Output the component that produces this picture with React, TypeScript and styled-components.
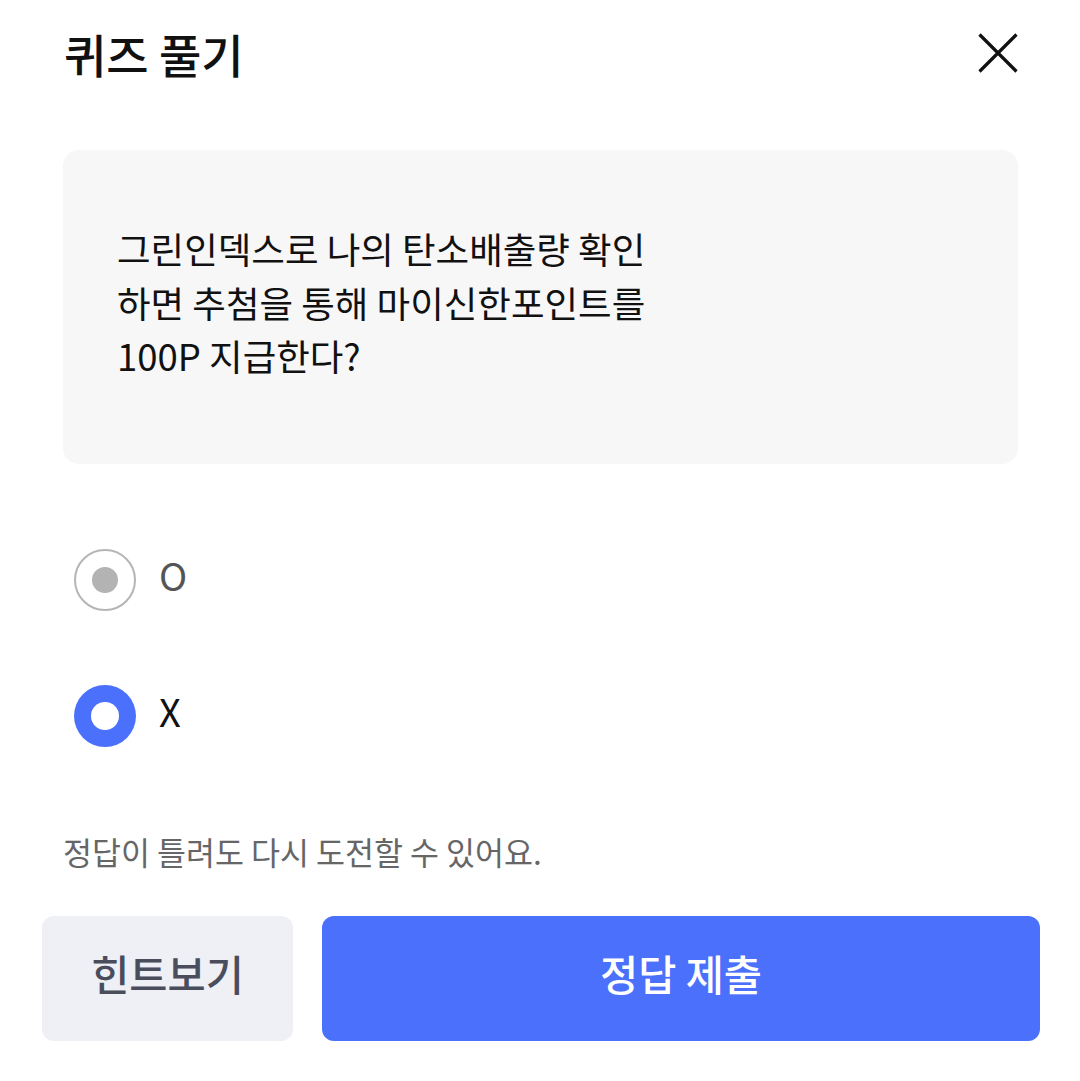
import React, { useState } from 'react';
import styled, { createGlobalStyle } from 'styled-components';

const GlobalStyle = createGlobalStyle`
  html, body {
    margin: 0;
    padding: 0;
    background: #ffffff;
  }
  body {
    font-family: "Noto Sans CJK KR", "Noto Sans", sans-serif;
    color: #111111;
  }
  * {
    box-sizing: border-box;
  }
`;

const StyledSheet = styled.div`
  width: 1080px;
  height: 1081px;
  display: flex;
  flex-direction: column;
  background: #ffffff;
`;

const StyledHeader = styled.div`
  height: 106px;
  display: flex;
  align-items: center;
  justify-content: space-between;
  padding: 0 58px 0 64px;
`;

const StyledTitle = styled.h1`
  margin: 0;
  font-size: 46px;
  line-height: 54px;
  font-weight: 500;
  color: #111111;
`;

const StyledCloseButton = styled.button`
  width: 48px;
  height: 48px;
  padding: 0;
  border: none;
  background: none;
  display: flex;
  align-items: center;
  justify-content: center;
  cursor: pointer;
`;

const StyledQuestionCard = styled.div`
  margin: 44px 62px 0 63px;
  height: 314px;
  border-radius: 16px;
  background: #f7f7f7;
  padding: 72px 54px 0;
`;

const StyledQuestionText = styled.p`
  margin: 0;
  font-size: 36.5px;
  line-height: 53.5px;
  font-weight: 400;
  color: #111111;
  white-space: pre-line;
`;

const StyledOptionList = styled.div`
  margin: 48px 0 0 74px;
  display: flex;
  flex-direction: column;
`;

const StyledOption = styled.label`
  height: 136px;
  display: flex;
  align-items: center;
  gap: 23px;
  cursor: pointer;
`;

const StyledRadio = styled.span<{ $checked: boolean }>`
  width: 62px;
  height: 62px;
  border-radius: 50%;
  display: flex;
  align-items: center;
  justify-content: center;
  background: ${({ $checked }) => ($checked ? '#4a70fc' : '#ffffff')};
  border: ${({ $checked }) => ($checked ? 'none' : '2px solid #b5b5b5')};

  &::after {
    content: '';
    width: ${({ $checked }) => ($checked ? '28px' : '26px')};
    height: ${({ $checked }) => ($checked ? '28px' : '26px')};
    border-radius: 50%;
    background: ${({ $checked }) => ($checked ? '#ffffff' : '#b3b3b3')};
  }
`;

const StyledOptionLabel = styled.span<{ $checked: boolean }>`
  font-size: 38px;
  line-height: 44px;
  margin-top: -10px;
  color: ${({ $checked }) => ($checked ? '#111111' : '#555555')};
`;

const StyledNotice = styled.p`
  margin: 47px 0 0 63px;
  font-size: 31.5px;
  line-height: 40px;
  color: #666666;
`;

const StyledButtonRow = styled.div`
  margin: 45px 40px 0 42px;
  display: flex;
  gap: 29px;
`;

const StyledButton = styled.button<{ $primary?: boolean }>`
  height: 125px;
  border: none;
  border-radius: 12px;
  font-family: inherit;
  font-size: 41.5px;
  font-weight: 500;
  padding-bottom: 12px;
  cursor: pointer;
  flex: ${({ $primary }) => ($primary ? '1' : '0 0 251px')};
  background: ${({ $primary }) => ($primary ? '#4a70fc' : '#eef0f5')};
  color: ${({ $primary }) => ($primary ? '#ffffff' : '#4a4d5c')};
`;

const options = ['O', 'X'];

const App = () => {
  const [answer, setAnswer] = useState('X');

  return (
    <StyledSheet>
      <GlobalStyle />
      <StyledHeader>
        <StyledTitle>퀴즈 풀기</StyledTitle>
        <StyledCloseButton aria-label="닫기">
          <svg width="40" height="40" viewBox="0 0 40 40">
            <path d="M1.5 1.5 L38.5 38.5 M38.5 1.5 L1.5 38.5" stroke="#111111" strokeWidth="3.2" />
          </svg>
        </StyledCloseButton>
      </StyledHeader>
      <StyledQuestionCard>
        <StyledQuestionText>
          {'그린인덱스로 나의 탄소배출량 확인\n하면 추첨을 통해 마이신한포인트를\n100P 지급한다?'}
        </StyledQuestionText>
      </StyledQuestionCard>
      <StyledOptionList>
        {options.map((option) => (
          <StyledOption key={option} onClick={() => setAnswer(option)}>
            <StyledRadio $checked={answer === option} />
            <StyledOptionLabel $checked={answer === option}>{option}</StyledOptionLabel>
          </StyledOption>
        ))}
      </StyledOptionList>
      <StyledNotice>정답이 틀려도 다시 도전할 수 있어요.</StyledNotice>
      <StyledButtonRow>
        <StyledButton>힌트보기</StyledButton>
        <StyledButton $primary>정답 제출</StyledButton>
      </StyledButtonRow>
    </StyledSheet>
  );
};

export default App;
